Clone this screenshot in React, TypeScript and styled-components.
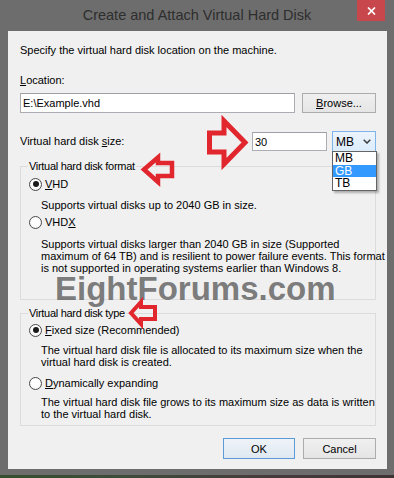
import React from "react";
import styled, { createGlobalStyle } from "styled-components";

const GlobalStyle = createGlobalStyle`
  html, body {
    margin: 0;
    padding: 0;
    background: #5e5e5e;
  }
  body {
    font-family: "Liberation Sans", Arial, sans-serif;
  }
`;

const Frame = styled.div`
  position: relative;
  width: 394px;
  height: 478px;
  background: #6d6d6d;
  display: flex;
  flex-direction: column;
  overflow: hidden;
`;

const TitleBar = styled.div`
  height: 31px;
  display: grid;
  grid-template-columns: 37px 1fr 37px;
`;

const TitleText = styled.div`
  grid-column: 2;
  text-align: center;
  line-height: 31px;
  font-size: 14.5px;
  color: #2e2e2e;
  white-space: nowrap;
`;

const CloseButton = styled.div`
  grid-column: 3;
  width: 28px;
  height: 21px;
  background: #c7474c;
  display: flex;
  align-items: center;
  justify-content: center;
`;

const Client = styled.div`
  margin: 0 7px 0 8px;
  height: 438px;
  padding: 0 11px 0 12px;
  background: #f0f0f0;
  display: flex;
  flex-direction: column;
  font-size: 11px;
  color: #000;
`;

const BottomEdge = styled.div`
  flex: 1;
  display: flex;
  flex-direction: column;
  justify-content: flex-end;
`;

const DesktopStrip = styled.div`
  height: 3px;
  background: linear-gradient(90deg, #35502f 0%, #3e4a3a 35%, #463a3c 70%, #3d3436 100%);
`;

const Text = styled.div<{ $top: number }>`
  margin-top: ${(p) => p.$top}px;
  line-height: 13px;
  white-space: nowrap;
`;

const LocationRow = styled.div`
  margin-top: 6.5px;
  height: 20px;
  display: flex;
  gap: 7px;
`;

const TextBox = styled.div<{ $width?: number }>`
  box-sizing: border-box;
  ${(p) => (p.$width ? `width: ${p.$width}px;` : "flex: 1;")}
  height: 100%;
  border: 1px solid #abadb3;
  border-top-color: #9ea0a6;
  background: #fff;
  padding-left: 2px;
  display: flex;
  align-items: center;
  font-size: 11px;
`;

const PushButton = styled.div<{ $width: number; $default?: boolean }>`
  box-sizing: border-box;
  width: ${(p) => p.$width}px;
  height: 100%;
  border: 1px solid ${(p) => (p.$default ? "#5a9bd8" : "#acacac")};
  background: ${(p) =>
    p.$default
      ? "linear-gradient(#eef3f8, #dfe8f1)"
      : "linear-gradient(#f0f0f0, #e5e5e5)"};
  display: flex;
  align-items: center;
  justify-content: center;
  font-size: 11px;
`;

const SizeRow = styled.div`
  margin-top: 18px;
  height: 21px;
  display: flex;
  align-items: center;
  gap: 5px;
`;

const SizeLabel = styled.div`
  flex: 1;
  margin-right: -5px;
  line-height: 13px;
`;

const SizeBox = styled(TextBox)`
  height: 19px;
`;

const Combo = styled.div`
  position: relative;
  box-sizing: border-box;
  width: 44px;
  height: 21px;
  border: 1px solid #7eb4ea;
  background: linear-gradient(#ecf4fc, #dcecfc);
  display: flex;
  align-items: center;
  justify-content: space-between;
  padding: 0 4px 0 3px;
  font-size: 12px;
`;

const DropList = styled.div`
  position: absolute;
  top: 100%;
  left: -1px;
  width: 45px;
  box-sizing: border-box;
  border: 1px solid #646464;
  background: #fff;
  box-shadow: 2px 2px 2px rgba(0, 0, 0, 0.28);
  z-index: 2;
`;

const DropItem = styled.div<{ $selected?: boolean }>`
  height: 12.5px;
  line-height: 12.5px;
  padding-left: 2px;
  font-size: 12px;
  background: ${(p) => (p.$selected ? "#3399ff" : "transparent")};
  color: ${(p) => (p.$selected ? "#fff" : "#000")};
`;

const Group = styled.fieldset<{ $top: number; $bottom: number }>`
  margin: ${(p) => p.$top}px 0 0;
  padding: 0 8px ${(p) => p.$bottom}px;
  border: 1px solid #dcdcdc;
  min-width: 0;
`;

const Legend = styled.legend`
  padding: 0 1px;
  margin-left: -1px;
  line-height: 13px;
  font-size: 11px;
  letter-spacing: -0.3px;
`;

const RadioRow = styled.div<{ $top: number }>`
  margin-top: ${(p) => p.$top}px;
  height: 13px;
  display: flex;
  align-items: center;
  gap: 3px;
  line-height: 13px;
`;

const RadioCircle = styled.span<{ $checked?: boolean }>`
  box-sizing: border-box;
  width: 13px;
  height: 13px;
  border-radius: 50%;
  border: 1px solid #4a4a4a;
  background: radial-gradient(circle at 50% 40%, #ffffff 40%, #ececec 100%);
  display: flex;
  align-items: center;
  justify-content: center;

  &::after {
    content: "";
    display: ${(p) => (p.$checked ? "block" : "none")};
    width: 6px;
    height: 6px;
    border-radius: 50%;
    background: #1a1a1a;
  }
`;

const Desc = styled.div<{ $top: number }>`
  margin-top: ${(p) => p.$top}px;
  padding-left: 12px;
  line-height: 12.3px;
  white-space: nowrap;
`;

const ButtonRow = styled.div`
  margin-top: 12px;
  height: 21px;
  display: flex;
  justify-content: flex-end;
  gap: 8px;
`;

const Watermark = styled.div`
  position: absolute;
  left: 55px;
  top: 272px;
  font-size: 33px;
  line-height: 33px;
  font-weight: bold;
  color: rgba(92, 92, 92, 0.8);
  white-space: nowrap;
  pointer-events: none;
`;

const Annotations = styled.svg`
  position: absolute;
  left: 0;
  top: 0;
  pointer-events: none;
  z-index: 3;
`;

function Radio({ checked, top, children }: { checked?: boolean; top: number; children: React.ReactNode }) {
  return (
    <RadioRow $top={top}>
      <RadioCircle $checked={checked} />
      <span>{children}</span>
    </RadioRow>
  );
}

export default function App() {
  return (
    <>
      <GlobalStyle />
      <Frame>
        <TitleBar>
          <TitleText>Create and Attach Virtual Hard Disk</TitleText>
          <CloseButton>
            <svg width="9" height="8" viewBox="0 0 9 8">
              <path d="M1 0.5 L8 7.5 M8 0.5 L1 7.5" stroke="#fff" strokeWidth="1.7" />
            </svg>
          </CloseButton>
        </TitleBar>

        <Client>
          <Text $top={12.5}>Specify the virtual hard disk location on the machine.</Text>
          <Text $top={17}>
            <u>L</u>ocation:
          </Text>
          <LocationRow>
            <TextBox>E:\Example.vhd</TextBox>
            <PushButton $width={74}>
              <span>
                <u>B</u>rowse...
              </span>
            </PushButton>
          </LocationRow>

          <SizeRow>
            <SizeLabel>
              Virtual hard disk <u>s</u>ize:
            </SizeLabel>
            <SizeBox $width={75}>30</SizeBox>
            <Combo>
              <span>MB</span>
              <svg width="8" height="5" viewBox="0 0 8 5">
                <path d="M0.7 0.7 L4 4 L7.3 0.7" stroke="#3c3c3c" strokeWidth="1.5" fill="none" />
              </svg>
              <DropList>
                <DropItem>MB</DropItem>
                <DropItem $selected>GB</DropItem>
                <DropItem>TB</DropItem>
              </DropList>
            </Combo>
          </SizeRow>

          <Group $top={7.5} $bottom={24}>
            <Legend>Virtual hard disk format</Legend>
            <Radio checked top={5}>
              <u>V</u>HD
            </Radio>
            <Desc $top={8.35}>Supports virtual disks up to 2040 GB in size.</Desc>
            <Radio top={5.35}>
              VHD<u>X</u>
            </Radio>
            <Desc $top={8.35}>
              Supports virtual disks larger than 2040 GB in size (Supported
              <br />
              maximum of 64 TB) and is resilient to power failure events. This format
              <br />
              is not supported in operating systems earlier than Windows 8.
            </Desc>
          </Group>

          <Group $top={7} $bottom={4.5}>
            <Legend>Virtual hard disk type</Legend>
            <Radio checked top={4}>
              <u>F</u>ixed size (Recommended)
            </Radio>
            <Desc $top={7.35}>
              The virtual hard disk file is allocated to its maximum size when the
              <br />
              virtual hard disk is created.
            </Desc>
            <Radio top={8}>
              <u>D</u>ynamically expanding
            </Radio>
            <Desc $top={6.35}>
              The virtual hard disk file grows to its maximum size as data is written
              <br />
              to the virtual hard disk.
            </Desc>
          </Group>

          <ButtonRow>
            <PushButton $width={72} $default>
              OK
            </PushButton>
            <PushButton $width={73}>Cancel</PushButton>
          </ButtonRow>
        </Client>

        <BottomEdge>
          <DesktopStrip />
        </BottomEdge>

        <Watermark>EightForums.com</Watermark>

        <Annotations width="394" height="478" viewBox="0 0 394 478">
          <g fill="none" stroke="#e1262d" strokeLinejoin="miter" strokeMiterlimit={6}>
            <polygon
              strokeWidth="5"
              points="209.5,133 224,133 224,121 245,142.5 224,164 224,152 209.5,152"
            />
            <polygon
              strokeWidth="4.5"
              points="144,169.5 158,157.5 158,163 172,163 172,176 158,176 158,182"
            />
            <polygon
              strokeWidth="4"
              points="131,313 141,302 141,307 155,307 155,319 141,319 141,324"
            />
          </g>
        </Annotations>
      </Frame>
    </>
  );
}
